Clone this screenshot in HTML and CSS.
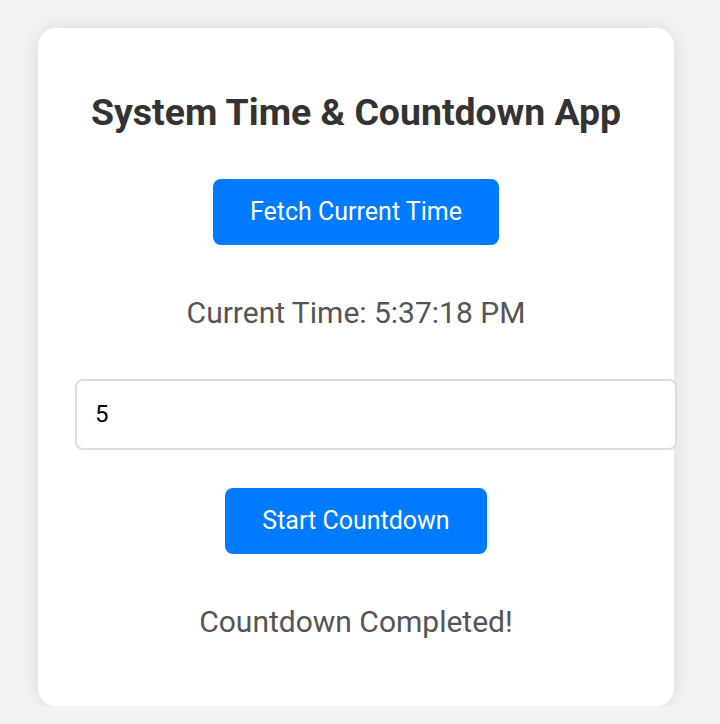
FILE: index.html
```html
<!DOCTYPE html>
<html>
<head>
<meta charset="utf-8">
<link rel="stylesheet" href="styles.css">
</head>
<body>
<div class="card">
  <h1 class="title">System Time &amp; Countdown App</h1>
  <button class="btn btn-fetch">Fetch Current Time</button>
  <p class="info info-time">Current Time: 5:37:18 PM</p>
  <input class="field" type="number" value="5">
  <button class="btn btn-start">Start Countdown</button>
  <p class="info info-done">Countdown Completed!</p>
</div>
</body>
</html>
```
FILE: styles.css
```css
html, body {
  margin: 0;
  padding: 0;
  background: #f3f3f3;
  font-family: Roboto, "Liberation Sans", sans-serif;
}
.card {
  box-sizing: border-box;
  width: 636px;
  height: 678px;
  margin: 28px 0 0 38px;
  padding: 37px 37px 0;
  background: #fff;
  border-radius: 18px;
  box-shadow: 0 0 20px rgba(0, 0, 0, 0.1);
  display: flex;
  flex-direction: column;
  align-items: center;
  text-align: center;
}
.title {
  margin: 25px 0 0;
  font-size: 37.4px;
  line-height: 44px;
  font-weight: 700;
  color: #333;
  white-space: nowrap;
}
.btn {
  font-family: Roboto, "Liberation Sans", sans-serif;
  background: #007bff;
  color: #fff;
  border: none;
  border-radius: 8px;
  font-size: 25px;
  line-height: 30px;
  padding: 18px 37px;
}
.btn-fetch { margin-top: 45px; }
.btn-start { margin-top: 38px; }
.info {
  margin: 0;
  font-size: 30px;
  line-height: 34px;
  color: #555;
}
.info-time { margin-top: 51px; }
.info-done { margin-top: 51px; }
.field {
  align-self: stretch;
  margin-top: 49px;
  width: 100%;
  border: 2px solid #ddd;
  border-radius: 8px;
  padding: 20px 18px;
  font-family: Roboto, "Liberation Sans", sans-serif;
  font-size: 24px;
  line-height: 27px;
  color: #000;
  outline: none;
  text-align: left;
}
```
